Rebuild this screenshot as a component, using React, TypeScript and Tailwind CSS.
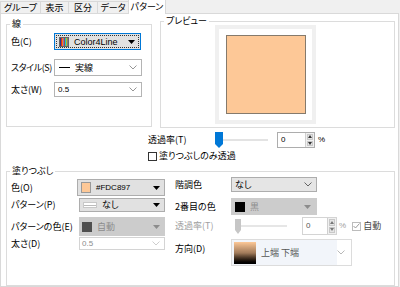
import React from 'react';

// small drawing helpers
function Arrow({ color = '#000' }: { color?: string }) {
  return (
    <svg width="7" height="4" viewBox="0 0 7 4">
      <path d="M0 0H7L3.5 4Z" fill={color} />
    </svg>
  );
}

function Chevron({ color = '#8a8a8a' }: { color?: string }) {
  return (
    <svg width="8" height="5" viewBox="0 0 8 5" fill="none">
      <path d="M0.5 0.5L4 4L7.5 0.5" stroke={color} strokeWidth="0.9" />
    </svg>
  );
}

function SpinButtons({ color = '#333' }: { color?: string }) {
  return (
    <div className="flex w-[9px] flex-col gap-[1px] border-l border-[#d0d0d0] bg-[#f0f0f0] p-[1px]">
      <div className="flex flex-1 items-center justify-center border border-[#c8c8c8] bg-[#e5e5e5]">
        <svg width="4" height="3" viewBox="0 0 4 3">
          <path d="M0 3H4L2 0Z" fill={color} />
        </svg>
      </div>
      <div className="flex flex-1 items-center justify-center border border-[#c8c8c8] bg-[#e5e5e5]">
        <svg width="4" height="3" viewBox="0 0 4 3">
          <path d="M0 0H4L2 3Z" fill={color} />
        </svg>
      </div>
    </div>
  );
}

const stripeColors = ['#1f3c88', '#d62728', '#2ca02c', '#ff7f0e', '#9467bd', '#8c564b', '#17becf', '#e377c2', '#bcbd22', '#7f7f7f'];

export default function App() {
  return (
    <div className="relative h-[287px] w-[400px] overflow-hidden whitespace-nowrap bg-[#f0f0f0] font-['Noto_Sans_CJK_JP',sans-serif] text-[9px] leading-[10px] text-black [font-feature-settings:'palt']">
      {/* Tabs */}
      <div className="flex h-[13px] items-end">
        <div className="flex h-[12px] w-[40px] items-center justify-center border-t border-l border-[#d9d9d9] bg-[#f0f0f0]">グループ</div>
        <div className="flex h-[12px] w-[28px] items-center justify-center border-t border-l border-[#d9d9d9] bg-[#f0f0f0]">表示</div>
        <div className="flex h-[12px] w-[29px] items-center justify-center border-t border-l border-[#d9d9d9] bg-[#f0f0f0]">区分</div>
        <div className="flex h-[12px] w-[31px] items-center justify-center border-t border-l border-[#d9d9d9] bg-[#f0f0f0]">データ</div>
        <div className="relative z-10 -mb-[1px] flex h-[15px] w-[38px] items-center justify-center border border-b-0 border-[#d9d9d9] bg-white">パターン</div>
      </div>

      {/* Panel */}
      <div className="h-[274px] w-[399px] border border-[#d9d9d9] bg-white">
        {/* Top row */}
        <div className="flex items-start">
          {/* 線 */}
          <fieldset className="ml-[5px] mt-[5px] h-[108px] w-[146px] border border-[#dcdcdc] pl-[3px]">
            <legend className="px-[2px] leading-[10px]">線</legend>
            <div className="flex flex-col pl-[1px] pt-[4px]">
              <div className="flex h-[17px] items-center">
                <span className="w-[43px]">色(C)</span>
                <div className="flex h-[17px] w-[87px] items-center border border-[#0078d7] bg-[#e1e1e1] p-[1px]">
                  <div className="flex h-full w-full items-center border border-dotted border-[#333] pl-[2px] pr-[3px]">
                    <div className="flex h-[10px] w-[10px] border border-[#666]">
                      {stripeColors.map((c) => (
                        <div key={c} className="h-full flex-1" style={{ backgroundColor: c }} />
                      ))}
                    </div>
                    <span className="ml-[5px] flex-1 font-['Liberation_Sans',sans-serif]">Color4Line</span>
                    <Arrow />
                  </div>
                </div>
              </div>
              <div className="mt-[9px] flex h-[17px] items-center">
                <span className="w-[43px] tracking-[-0.4px]">スタイル(S)</span>
                <div className="flex h-[17px] w-[88px] items-center border border-[#b4b4b4] bg-white pl-[4px] pr-[4px]">
                  <div className="h-[1px] w-[11px] bg-black" />
                  <span className="ml-[5px] flex-1">実線</span>
                  <Chevron />
                </div>
              </div>
              <div className="mt-[6px] flex h-[15px] items-center">
                <span className="w-[43px]">太さ(W)</span>
                <div className="flex h-[15px] w-[88px] items-center border border-[#b4b4b4] bg-white pl-[3px] pr-[4px]">
                  <span className="flex-1 font-['Liberation_Sans',sans-serif] text-[8px]">0.5</span>
                  <Chevron />
                </div>
              </div>
            </div>
          </fieldset>

          {/* プレビュー */}
          <fieldset className="ml-[8px] mt-[2px] h-[112px] w-[235px] border border-[#dcdcdc] pl-[3px]">
            <legend className="px-[2px] leading-[10px]">プレビュー</legend>
            <div className="-mt-[1px] ml-[51px] flex h-[99px] w-[101px] items-center justify-center border-4 border-[#f0f0f0] bg-white">
              <div className="h-[79px] w-[80px] border border-[#857a6c] bg-[#fdc897]" />
            </div>
          </fieldset>
        </div>

        {/* 透過率 */}
        <div className="ml-[147px] mt-[4px] flex h-[16px] items-center">
          <span className="w-[67px]">透過率(T)</span>
          <svg width="8" height="16" viewBox="0 0 8 16">
            <path d="M0 0H8V12L4 16L0 12Z" fill="#0078d7" />
          </svg>
          <div className="h-[2px] w-[45px] bg-[#e3e3e3]" />
          <div className="ml-[9px] flex h-[16px] w-[38px] border border-[#adadad] bg-white">
            <span className="flex-1 pl-[3px] font-['Liberation_Sans',sans-serif] text-[8px] leading-[14px]">0</span>
            <SpinButtons />
          </div>
          <span className="ml-[3px] font-['Liberation_Sans',sans-serif] text-[8px]">%</span>
        </div>
        <div className="ml-[147px] mt-[3px] flex items-center">
          <div className="h-[9px] w-[9px] border border-[#333] bg-white" />
          <span className="ml-[2px]">塗りつぶしのみ透過</span>
        </div>

        {/* 塗りつぶし */}
        <fieldset className="ml-[5px] mt-[5px] h-[120px] w-[389px] border border-[#dcdcdc] pl-[3px]">
          <legend className="px-[2px] leading-[10px]">塗りつぶし</legend>
          <div className="flex pl-[1px]">
            {/* left column */}
            <div className="flex w-[155px] flex-col">
              <div className="mt-[3px] flex h-[17px] items-center">
                <span className="w-[66px]">色(O)</span>
                <div className="flex h-[17px] w-[88px] items-center border border-[#adadad] bg-[#e1e1e1] pl-[3px] pr-[4px]">
                  <div className="h-[11px] w-[10px] border border-[#999] bg-[#fdc897]" />
                  <span className="ml-[5px] flex-1 font-['Liberation_Sans',sans-serif] text-[8px]">#FDC897</span>
                  <Arrow />
                </div>
              </div>
              <div className="mt-[2px] flex h-[14px] items-center">
                <span className="w-[68px]">パターン(P)</span>
                <div className="flex h-[14px] w-[86px] items-center border border-[#adadad] bg-[#e1e1e1] pl-[3px] pr-[4px]">
                  <div className="flex h-[6px] w-[14px] items-center border border-[#c8c8c8] bg-white">
                    <div className="h-[1px] w-full bg-[#bbb]" />
                  </div>
                  <span className="ml-[5px] flex-1">なし</span>
                  <Arrow />
                </div>
              </div>
              <div className="mt-[5px] flex h-[19px] items-center">
                <span className="w-[68px]">パターンの色(E)</span>
                <div className="flex h-[19px] w-[86px] items-center bg-[#cccccc] pl-[3px] pr-[5px] text-[#8c8c8c]">
                  <div className="h-[10px] w-[10px] bg-[#4f4f4f]" />
                  <span className="ml-[5px] flex-1">自動</span>
                  <Arrow color="#8c8c8c" />
                </div>
              </div>
              <div className="mt-[1px] flex h-[13px] items-center">
                <span className="w-[68px]">太さ(D)</span>
                <div className="flex h-[13px] w-[86px] items-center border border-[#d4d4d4] bg-white pl-[2px] pr-[4px] text-[#8c8c8c]">
                  <span className="flex-1 font-['Liberation_Sans',sans-serif] text-[8px]">0.5</span>
                  <Chevron color="#c8c8c8" />
                </div>
              </div>
            </div>

            {/* right column */}
            <div className="ml-[9px] flex flex-col">
              <div className="mt-[1px] flex h-[15px] items-center">
                <span className="w-[56px]">階調色</span>
                <div className="flex h-[15px] w-[86px] items-center border border-[#adadad] bg-[#e5e5e5] pl-[3px] pr-[4px]">
                  <span className="flex-1">なし</span>
                  <Chevron color="#555" />
                </div>
              </div>
              <div className="mt-[6px] flex h-[17px] items-center">
                <span className="w-[56px]">2番目の色</span>
                <div className="flex h-[17px] w-[86px] items-center bg-[#cccccc] pl-[4px] pr-[6px] text-[#8c8c8c]">
                  <div className="h-[10px] w-[10px] bg-black" />
                  <span className="ml-[5px] flex-1">黒</span>
                  <Arrow color="#8c8c8c" />
                </div>
              </div>
              <div className="mt-[2px] flex h-[18px] items-center">
                <span className="w-[60px] text-[#a0a0a0]">透過率(T)</span>
                <svg width="6" height="15" viewBox="0 0 6 15">
                  <path d="M0 0H6V11L3 15L0 11Z" fill="#c6c6c6" />
                </svg>
                <div className="h-[2px] w-[46px] bg-[#e6e6e6]" />
                <div className="ml-[15px] flex h-[18px] w-[35px] border border-[#d4d4d4] bg-white">
                  <span className="flex-1 pl-[3px] font-['Liberation_Sans',sans-serif] text-[8px] leading-[16px] text-[#555]">0</span>
                  <SpinButtons color="#777" />
                </div>
                <span className="ml-[2px] font-['Liberation_Sans',sans-serif] text-[8px] text-[#a0a0a0]">%</span>
                <div className="ml-[6px] flex h-[9px] w-[9px] items-center justify-center border border-[#bcbcbc] bg-white">
                  <svg width="7" height="6" viewBox="0 0 7 6" fill="none">
                    <path d="M0.5 3L2.5 5L6.5 0.5" stroke="#9a9a9a" strokeWidth="1" />
                  </svg>
                </div>
                <span className="ml-[2px] text-[#444]">自動</span>
              </div>
              <div className="mt-[4px] flex items-start">
                <span className="mt-[5px] w-[56px]">方向(D)</span>
                <div className="flex h-[27px] w-[121px] items-center border border-[#dcdcdc] bg-white pr-[6px]">
                  <div className="flex h-full w-[107px] items-center bg-[#f2f5fa] pl-[2px]">
                    <div className="h-[22px] w-[22px] bg-linear-to-b from-[#fdc897] via-[#a07a5a] to-black" />
                    <span className="ml-[5px] text-[#555]">上端 下端</span>
                  </div>
                  <div className="ml-auto">
                    <Chevron color="#b0b0b0" />
                  </div>
                </div>
              </div>
            </div>
          </div>
        </fieldset>
      </div>
    </div>
  );
}
